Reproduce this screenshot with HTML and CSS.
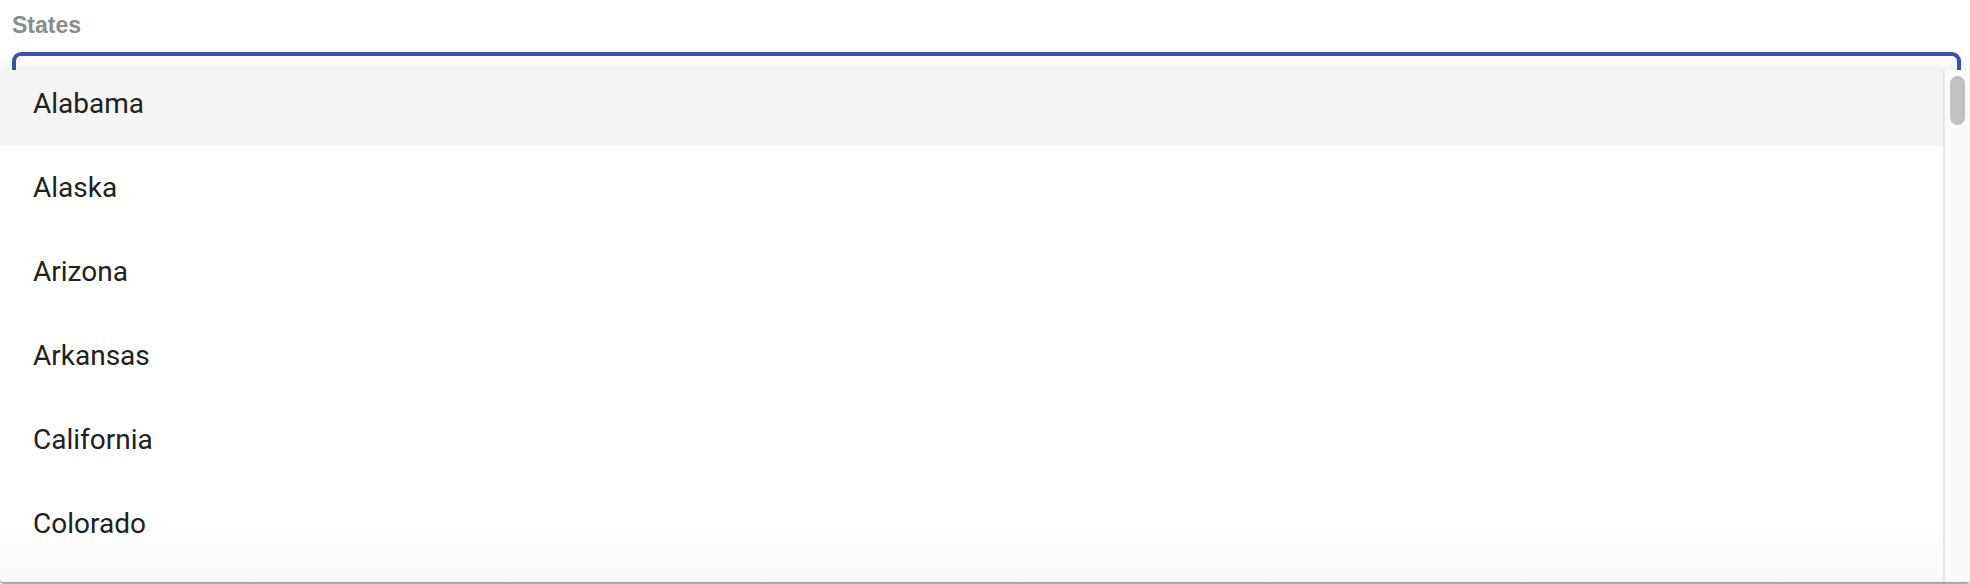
FILE: index.html
```html
<!DOCTYPE html>
<html lang="en">
<head>
    <meta charset="UTF-8">
    <title>States</title>
    <link rel="stylesheet" href="styles.css">
</head>
<body>
    <div class="picker">
        <div class="picker-label">States</div>
        <div class="picker-field"></div>
        <div class="menu">
            <div class="menu-list">
                <div class="menu-inner">
                    <div class="option active">Alabama</div>
                    <div class="option">Alaska</div>
                    <div class="option">Arizona</div>
                    <div class="option">Arkansas</div>
                    <div class="option">California</div>
                    <div class="option">Colorado</div>
                </div>
            </div>
            <div class="scroll-track"><div class="scroll-thumb"></div></div>
        </div>
    </div>
</body>
</html>
```

FILE: styles.css
```css
body {
    margin: 0;
    font-family: Roboto, "Liberation Sans", sans-serif;
    background-color: #fff;
    overflow: hidden;
}
.picker {
    position: relative;
    height: 584px;
}
.picker-label {
    padding: 13px 0 0 12px;
    font-family: "Liberation Sans", Arial, sans-serif;
    font-size: 23px;
    line-height: 24px;
    font-weight: bold;
    color: #8c8c8c;
}
.picker-field {
    margin: 15px 9px 0 12px;
    height: 80px;
    border: 4px solid #3f51b5;
    border-bottom: none;
    border-radius: 9px 9px 0 0;
}
.menu {
    position: absolute;
    top: 70px;
    left: 0;
    right: 0;
    height: 512px;
    display: flex;
    background: linear-gradient(to bottom, #fff 88%, #f9f9f9);
    border-radius: 4px;
    box-shadow: 0 2px 1px rgba(0, 0, 0, 0.35), 0 -4px 14px rgba(0, 0, 0, 0.07), -1px 0 1px rgba(0, 0, 0, 0.12);
}
.menu-list {
    flex: 1;
    overflow: hidden;
}
.menu-inner {
    margin-top: -8px;
}
.option {
    height: 84px;
    line-height: 84px;
    padding-left: 33px;
    font-size: 28px;
    color: #212121;
}
.option.active {
    background-color: #f4f4f4;
}
.scroll-track {
    width: 25px;
    border-left: 2px solid #e8e8e8;
    background-color: #fafafa;
}
.scroll-thumb {
    margin: 6px 0 0 5px;
    width: 15px;
    height: 49px;
    border-radius: 8px;
    background-color: #c1c1c1;
}
```
